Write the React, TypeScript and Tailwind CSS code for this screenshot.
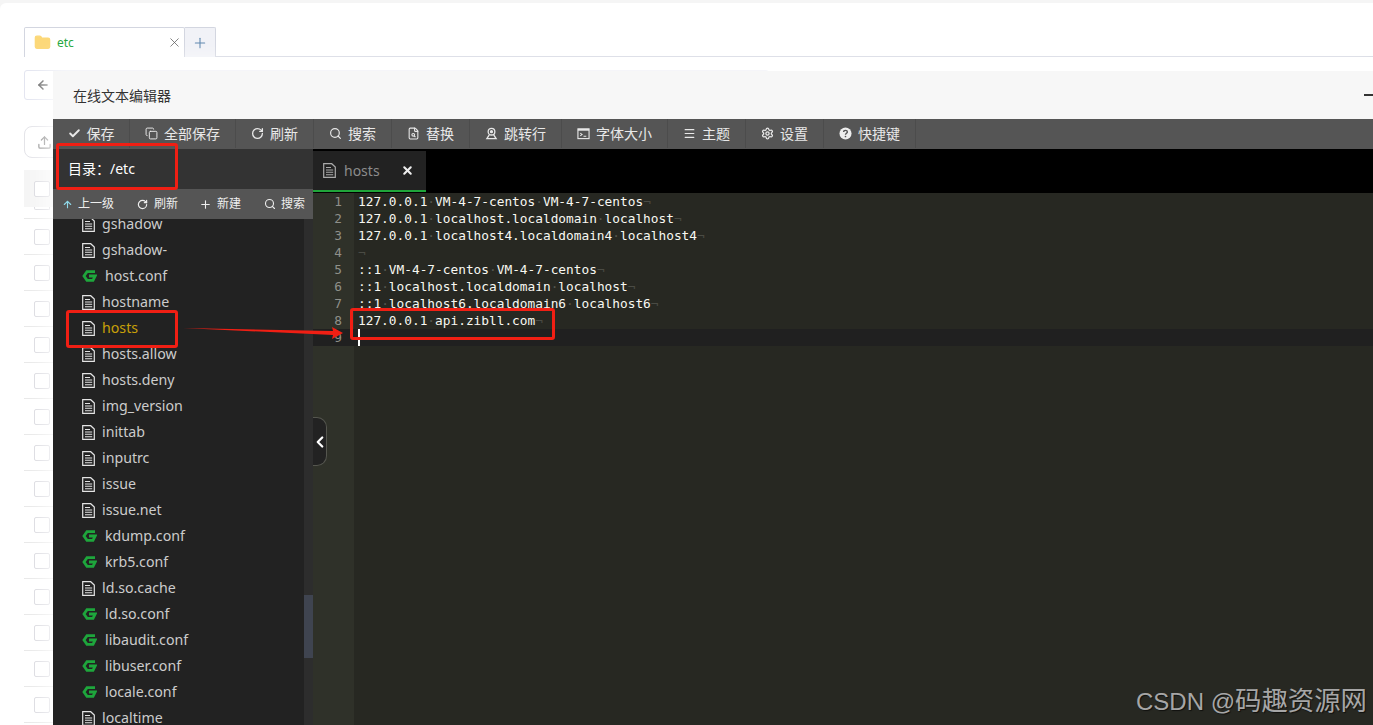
import {
  ArrowLeft, Upload, X, Plus, Check, Copy, RotateCw, Search, FileSearch,
  Menu, Settings, ArrowUp, ChevronLeft, Folder,
} from 'lucide-react'

function PinIcon({ size = 13 }: { size?: number }) {
  return (
    <svg width={size} height={size} viewBox="0 0 14 14" fill="none" stroke="currentColor" strokeWidth="1.4">
      <circle cx="7" cy="5" r="3.6" />
      <circle cx="7" cy="5" r="1" fill="currentColor" />
      <path d="M4.6 8.5 2 12.6h10L9.4 8.5" />
    </svg>
  )
}

function WindowIcon({ size = 13 }: { size?: number }) {
  return (
    <svg width={size} height={size} viewBox="0 0 14 14" fill="none" stroke="currentColor">
      <rect x="1" y="2" width="12" height="10.5" strokeWidth="1.2" />
      <path d="M1 3h12" strokeWidth="2" />
      <path d="M3.5 6.5 5.5 8l-2 1.5M7 10h3" strokeWidth="1.1" />
    </svg>
  )
}

function HelpIcon({ size = 13 }: { size?: number }) {
  return (
    <svg width={size} height={size} viewBox="0 0 14 14" fill="none">
      <circle cx="7" cy="7" r="6.5" fill="#eee" />
      <path d="M5 5.4C5 4.2 6 3.6 7 3.6s2 .6 2 1.7c0 1.4-2 1.5-2 3" stroke="#555" strokeWidth="1.5" />
      <circle cx="7" cy="10.2" r="0.9" fill="#555" />
    </svg>
  )
}

const toolbar = [
  { icon: Check, label: '保存', w: 'w-[77px]', stroke: 3.5 },
  { icon: Copy, label: '全部保存', w: 'w-[106px]', stroke: 1.8 },
  { icon: RotateCw, label: '刷新', w: 'w-[78px]', stroke: 2.4 },
  { icon: Search, label: '搜索', w: 'w-[78px]', stroke: 2.2 },
  { icon: FileSearch, label: '替换', w: 'w-[78px]', stroke: 2 },
  { icon: PinIcon, label: '跳转行', w: 'w-[92px]', stroke: 2 },
  { icon: WindowIcon, label: '字体大小', w: 'w-[106px]', stroke: 2 },
  { icon: Menu, label: '主题', w: 'w-[78px]', stroke: 2.2 },
  { icon: Settings, label: '设置', w: 'w-[78px]', stroke: 2.4 },
  { icon: HelpIcon, label: '快捷键', w: 'w-[92px]', stroke: 2 },
]

const files = [
  { name: 'gshadow', conf: false },
  { name: 'gshadow-', conf: false },
  { name: 'host.conf', conf: true },
  { name: 'hostname', conf: false },
  { name: 'hosts', conf: false, active: true },
  { name: 'hosts.allow', conf: false },
  { name: 'hosts.deny', conf: false },
  { name: 'img_version', conf: false },
  { name: 'inittab', conf: false },
  { name: 'inputrc', conf: false },
  { name: 'issue', conf: false },
  { name: 'issue.net', conf: false },
  { name: 'kdump.conf', conf: true },
  { name: 'krb5.conf', conf: true },
  { name: 'ld.so.cache', conf: false },
  { name: 'ld.so.conf', conf: true },
  { name: 'libaudit.conf', conf: true },
  { name: 'libuser.conf', conf: true },
  { name: 'locale.conf', conf: true },
  { name: 'localtime', conf: false },
]

const lines = [
  '127.0.0.1 VM-4-7-centos VM-4-7-centos',
  '127.0.0.1 localhost.localdomain localhost',
  '127.0.0.1 localhost4.localdomain4 localhost4',
  '',
  '::1 VM-4-7-centos VM-4-7-centos',
  '::1 localhost.localdomain localhost',
  '::1 localhost6.localdomain6 localhost6',
  '127.0.0.1 api.zibll.com',
]

function ConfIcon() {
  return (
    <svg width="15" height="14" viewBox="0 0 15 14" className="shrink-0">
      <path d="M13 2.6H5L2 7l3 4.4h6L13.2 7H7" fill="none" stroke="#1ea63c" strokeWidth="2.8" />
    </svg>
  )
}

function DocIcon({ className = 'text-[#e4e4e4]' }: { className?: string }) {
  return (
    <svg width="13" height="15" viewBox="0 0 13 15" fill="none" stroke="currentColor" className={`shrink-0 ${className}`}>
      <path d="M.7.7h8l3.6 3.4v10.2H.7z" strokeWidth="1.2" />
      <path d="M3 4.5h5M3 7h7.2M3 9.3h7.2M3 11.7h7.2" strokeWidth="1.1" />
    </svg>
  )
}

function Line({ text }: { text: string }) {
  const parts = text.split(' ')
  return (
    <div className="h-[17px] whitespace-pre pl-[4px] leading-[17px] text-[#f8f8f2]">
      {parts.map((p, i) => (
        <span key={i}>
          {i > 0 && <span className="text-[#55564f]">·</span>}
          {p}
        </span>
      ))}
      <span className="text-[#4a4b44]">¬</span>
    </div>
  )
}

export default function App() {
  return (
    <div className="relative h-[725px] w-[1373px] overflow-hidden bg-[#f5f5f5] pt-[3px] font-['Noto_Sans','Noto_Sans_CJK_SC',sans-serif]">
      <div className="h-full rounded-tl-[6px] bg-white pl-[24px]">
        {/* file manager behind the editor */}
        <div className="flex h-[54px] items-end">
          <div className="flex h-[30px] w-[161px] items-center rounded-t-[2px] border border-b-0 border-[#d3d6e0] bg-white pl-[9px]">
            <Folder size={17} className="fill-[#fcd878] text-[#fcd878]" />
            <span className="ml-[6px] text-[12px] text-[#20a53a]">etc</span>
            <X size={15} strokeWidth={1.2} className="ml-auto mr-[2px] text-[#555]" />
          </div>
          <div className="flex h-[30px] w-[31px] items-center justify-center rounded-tr-[2px] border border-b-0 border-l-0 border-[#d3d6e0] bg-[#f1f2f7]">
            <Plus size={16} strokeWidth={1.6} className="text-[#5b84ad]" />
          </div>
          <div className="flex-1 border-b border-[#d3d6e0]" />
        </div>
        <div className="mt-[13px] flex h-[30px] w-[745px] rounded-[3px] border border-[#e3e5f0]">
          <div className="flex w-[35px] items-center justify-center">
            <ArrowLeft size={14} strokeWidth={2.6} className="text-[#555]" />
          </div>
          <div className="w-[49px] border-l border-[#e3e5f0]" />
          <div className="w-[19px] border-l border-[#e3e5f0]" />
          <div className="w-[30px] border-l border-[#e3e5f0]" />
          <div className="w-[19px] border-l border-[#e3e5f0]" />
          <div className="flex-1 border-l border-[#e3e5f0]" />
          <div className="w-[35px] border-l border-[#e3e5f0]" />
        </div>
        <div className="mt-[26px] flex h-[32px] w-[60px] items-center rounded-[8px] border border-[#e3e3e8] pl-[12px]">
          <Upload size={15} className="text-[#888]" />
        </div>
        <div className="mt-[12px]">
          <div className="flex h-[37px] items-center bg-[#f5f5f5] pl-[10px]">
            <div className="size-[16px] rounded-[2px] border border-[#d8d8de] bg-white" />
          </div>
          <div className="h-[12px] border-b border-[#e8e8e8] pl-[10px]">
            <div className="h-[3px] w-[16px] rounded-b-[2px] border border-t-0 border-[#d8d8de]" />
          </div>
          {Array.from({ length: 14 }).map((_, i) => (
            <div key={i} className="flex h-[36px] items-center border-b border-[#e8e8e8] pl-[10px]">
              <div className="size-[16px] rounded-[2px] border border-[#d8d8de] bg-white" />
            </div>
          ))}
        </div>
      </div>

      {/* editor window */}
      <div className="absolute left-[53px] top-[71px] flex h-[654px] w-[1320px] flex-col rounded-tl-[4px] shadow-[0_0_24px_8px_rgba(255,255,255,0.85)]">
        <div className="flex h-[48px] shrink-0 items-center justify-between bg-[#f7f7f7] pl-[20px] text-[14px] text-[#333]">
          <span>在线文本编辑器</span>
          <div className="h-[2px] w-[9px] bg-[#333]" />
        </div>
        <div className="flex h-[30px] shrink-0 bg-[#555] pb-[1px] text-[14px] text-[#e8e8e8]">
          {toolbar.map((t) => (
            <div key={t.label} className={`${t.w} flex items-center justify-center gap-[6px] border-r border-[#4c4c4c]`}>
              <t.icon size={13} strokeWidth={t.stroke} />
              <span>{t.label}</span>
            </div>
          ))}
        </div>
        <div className="flex min-h-0 flex-1">
          <div className="flex w-[260px] shrink-0 flex-col">
            <div className="flex h-[40px] shrink-0 items-center bg-[#333] pb-[2px] pl-[15px] text-[14px] text-white">目录：/etc</div>
            <div className="flex h-[30px] shrink-0 items-center gap-[23px] bg-[#555] pl-[9px] text-[12px] text-[#eee]">
              <span className="flex items-center gap-[5px]"><ArrowUp size={11} strokeWidth={2.4} className="text-[#8fd8e8]" />上一级</span>
              <span className="flex items-center gap-[6px]"><RotateCw size={11} strokeWidth={2.6} />刷新</span>
              <span className="-ml-[2px] flex items-center gap-[5px]"><Plus size={13} strokeWidth={2} />新建</span>
              <span className="flex items-center gap-[5px]"><Search size={12} strokeWidth={2.2} />搜索</span>
            </div>
            <div className="flex min-h-0 flex-1">
              <div className="w-[251px] overflow-hidden bg-[#222] pl-[29px] text-[14.2px] text-[#ccc]">
                <div className="-mt-[8px]">
                  {files.map((f) => (
                    <div key={f.name} className="flex h-[26px] items-center">
                      {f.conf ? <ConfIcon /> : <DocIcon />}
                      <span className={`${f.conf ? 'ml-[8px]' : 'ml-[7px]'} ${f.active ? 'text-[#c8a008]' : ''}`}>{f.name}</span>
                    </div>
                  ))}
                </div>
              </div>
              <div className="w-[9px] bg-[#2d2d2d] pt-[376px]">
                <div className="h-[63px] bg-[#3f4450]" />
              </div>
            </div>
          </div>
          <div className="relative flex min-w-0 flex-1 flex-col">
            <div className="h-[44px] shrink-0 bg-black pt-[2px]">
              <div className="flex h-[41px] w-[113px] items-center border-b-2 border-[#20a53a] bg-[#222] pl-[10px] text-[14px] text-[#8c8c8c]">
                <DocIcon className="text-[#aaa]" />
                <span className="ml-[8px]">hosts</span>
                <X size={13} strokeWidth={3.8} className="ml-auto mr-[12px] text-[#eee]" />
              </div>
            </div>
            <div className="flex flex-1 bg-[#272822] font-['DejaVu_Sans_Mono',monospace] text-[12.8px]">
              <div className="w-[41px] shrink-0 bg-[#2f3129] pr-[12px] text-right leading-[17px] text-[#8f908a]">
                {[1, 2, 3, 4, 5, 6, 7, 8, 9].map((n) => (
                  <div key={n} className={`h-[17px] ${n === 9 ? '-mr-[12px] bg-[#202020] pr-[12px]' : ''}`}>{n}</div>
                ))}
              </div>
              <div className="min-w-0 flex-1">
                {lines.map((l, i) => (
                  <Line key={i} text={l} />
                ))}
                <div className="relative h-[17px] bg-[#202020]">
                  <div className="absolute left-[4px] top-0 h-[17px] w-[2px] bg-white" />
                </div>
              </div>
            </div>
            <div className="absolute left-0 top-[268px] flex h-[49px] w-[14px] items-center justify-center rounded-r-[10px] border border-l-0 border-[#55564f] bg-[#222] text-white">
              <ChevronLeft size={18} strokeWidth={3} className="shrink-0" />
            </div>
          </div>
        </div>
      </div>

      {/* annotations */}
      <div className="absolute left-[56px] top-[143px] h-[47px] w-[122px] rounded-[3px] border-[3px] border-[#f01f14]" />
      <div className="absolute left-[66px] top-[310px] h-[38px] w-[112px] rounded-[3px] border-[3px] border-[#f01f14]" />
      <div className="absolute left-[350px] top-[308px] h-[32px] w-[205px] rounded-[3px] border-[3px] border-[#f01f14]" />
      <svg className="absolute left-[183px] top-[322px]" width="162" height="20" viewBox="0 0 162 20">
        <path d="M0 6 L150 9 L149 5 L160 11 L149 17 L150 13 Z" fill="#f01f14" />
      </svg>

      <div className="absolute right-[6px] top-[682px] flex items-center whitespace-pre font-['Liberation_Sans','Noto_Sans_CJK_SC',sans-serif] text-[24px] text-[#a6a6a6] [text-shadow:1px_1px_1px_rgba(0,0,0,0.6)]">
        CSDN @<span className="text-[26.4px]">码趣资源网</span>
      </div>
    </div>
  )
}
